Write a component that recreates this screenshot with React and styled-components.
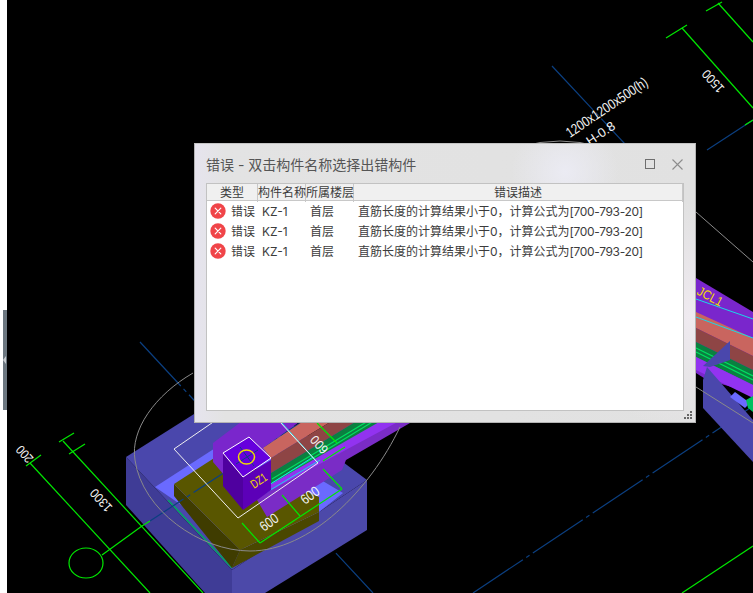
import React from "react";
import styled, { createGlobalStyle } from "styled-components";

const rows = [
  { type: "错误", name: "KZ-1", floor: "首层", desc: "直筋长度的计算结果小于0，计算公式为", code: "[700-793-20]" },
  { type: "错误", name: "KZ-1", floor: "首层", desc: "直筋长度的计算结果小于0，计算公式为", code: "[700-793-20]" },
  { type: "错误", name: "KZ-1", floor: "首层", desc: "直筋长度的计算结果小于0，计算公式为", code: "[700-793-20]" },
];

const ErrorIcon = () => (
  <IconSvg viewBox="0 0 16 16">
    <circle cx="8" cy="8" r="7.7" fill="#f04549" />
    <path d="M5.2 5.2 L10.8 10.8 M10.8 5.2 L5.2 10.8" stroke="#fff" strokeWidth="1.2" strokeLinecap="round" />
  </IconSvg>
);

const Drawing = () => (
  <Scene viewBox="7 0 746 593">
    {/* axis lines, dashed */}
    <g stroke="#0b3f80" strokeWidth="1.2" fill="none" strokeDasharray="60 4 4 4">
      <line x1="140" y1="342" x2="373" y2="593" />
      <line x1="552" y1="66" x2="640" y2="160" />
      <line x1="473" y1="593" x2="750" y2="408" />
      <line x1="707" y1="150" x2="753" y2="120" />
    </g>

    {/* foundation base */}
    <polygon points="126,457 232,570 232,593 205,593 126,505" fill="#3f3c96" />
    <polygon points="232,570 367,480 367,530 265,593 232,593" fill="#4c49a9" />
    <polygon points="126,457 240,385 367,480 232,570" fill="#4a47ac" />
    <polygon points="155,487 240,432 343,493 319,512 250,552" fill="#6a6aff" />
    <polyline points="168,500 232,568" stroke="#00a860" strokeWidth="1.5" fill="none" />

    {/* footing */}
    <polygon points="174,484 174,496 232,568 240,550" fill="#3f3c00" />
    <polygon points="240,550 319,512 319,521 232,568" fill="#4a4700" />
    <polygon points="174,484 222,453 319,497 319,512 240,550" fill="#595600" />

    {/* axis running through the column */}
    <line x1="150" y1="521" x2="300" y2="423" stroke="#0b3f80" strokeWidth="1.2" strokeDasharray="40 4 4 4" />

    {/* beam running up to the right */}
    <polygon points="250,488 267,517 342,470 346,460 410,423 410,400 300,440" fill="#7a2cc6" />
    <polygon points="258,490 262,495 420,410 400,400" fill="#9233f0" />
    <polygon points="213,443 213,462 225,476 271,458 263,448 330,400 270,400" fill="#7a26cc" />
    <polygon points="263,448 271,458 350,410 320,410" fill="#c9655f" />
    <polygon points="271,458 271,473 375,410 350,410" fill="#8e4545" />
    <polygon points="271,473 271,484 400,410 375,410" fill="#0a8040" />
    <g stroke="#00e060" strokeWidth="1.2">
      <line x1="272" y1="479" x2="368" y2="421" />
      <line x1="272" y1="483" x2="374" y2="421" />
    </g>
    <g stroke="#19d8e8" strokeWidth="1">
      <line x1="258" y1="492" x2="313" y2="457" />
      <line x1="262" y1="495" x2="320" y2="460" />
      <line x1="282" y1="423" x2="318" y2="463" />
    </g>

    {/* column */}
    <polygon points="223,453 243,477 243,510 223,486" fill="#4f009f" />
    <polygon points="243,477 271,460 271,490 243,510" fill="#5c00b8" />
    <polygon points="223,453 249,437 271,458 243,477" fill="#6600dd" stroke="#fff" strokeWidth="1" />
    <g stroke="#0b3f80" strokeWidth="1">
      <line x1="236" y1="464" x2="258" y2="450" />
      <line x1="240" y1="447" x2="254" y2="466" />
    </g>
    <ellipse cx="246.500" cy="457" rx="8" ry="7" fill="none" stroke="#f0dc00" strokeWidth="1.5" />

    {/* outline of the selected footing */}
    <polygon points="174,449 254,394 318,463 238,518" fill="none" stroke="#f0f0f0" strokeWidth="1" />

    {/* right hand beam */}
    <polygon points="696,278 753,312 753,393 707,380 696,373" fill="#7a26cc" />
    <polygon points="696,312 753,338 753,356 696,328" fill="#c9655f" />
    <polygon points="696,328 753,356 753,370 696,342" fill="#8e4545" />
    <polygon points="696,342 753,370 753,385 696,357" fill="#0a8040" />
    <polygon points="696,357 753,385 753,398 696,370" fill="#9233f0" />
    <g stroke="#00e060" strokeWidth="1.2">
      <line x1="696" y1="348" x2="753" y2="376" />
      <line x1="696" y1="352" x2="753" y2="380" />
    </g>
    <polygon points="703,366 730,341 730,360 710,367" fill="#4a47ac" />
    <polygon points="703,380 707,367 753,420 753,462 703,408" fill="#4a47ac" />
    <polygon points="735,392 750,403 745,408 730,397" fill="#6a6aff" />
    <polygon points="746,400 753,396 753,412 748,408" fill="#00c060" />
    <g stroke="#19d8e8" strokeWidth="1">
      <line x1="696" y1="299" x2="753" y2="319" />
      <line x1="696" y1="317" x2="753" y2="338" />
    </g>

    {/* dimension lines */}
    <g stroke="#00e800" strokeWidth="1.2" fill="none">
      <line x1="30" y1="463" x2="150" y2="593" />
      <line x1="63" y1="441" x2="203" y2="593" />
      <line x1="26" y1="466" x2="41" y2="455" />
      <line x1="59" y1="442" x2="74" y2="433" />
      <line x1="69" y1="454" x2="85" y2="444" />
      <ellipse cx="86" cy="563" rx="17" ry="15" />
      <line x1="102" y1="555" x2="142" y2="526" />
      <line x1="142" y1="526" x2="150" y2="521" />
      <line x1="242" y1="523" x2="260" y2="543" />
      <line x1="260" y1="543" x2="342" y2="489" />
      <line x1="282" y1="495" x2="300" y2="516" />
      <line x1="323" y1="469" x2="342" y2="489" />
      <line x1="323" y1="461" x2="345" y2="447" />
      <line x1="317" y1="423" x2="337" y2="443" />
      <line x1="666" y1="38" x2="687" y2="25" />
      <line x1="706" y1="11" x2="722" y2="2" />
      <line x1="682" y1="28" x2="753" y2="108" />
      <line x1="718" y1="3" x2="753" y2="42" />
      <line x1="745" y1="125" x2="753" y2="120" />
      <line x1="682" y1="593" x2="753" y2="546" />
    </g>

    {/* rotation guides */}
    <g stroke="#8a8a8a" strokeWidth="1" fill="none">
      <path d="M193 373 C155 395 130 430 135 460 C142 510 200 551 250 551 C310 551 370 490 400 427" />
      <path d="M520 147 Q560 135 600 147 Q660 180 696 212 L753 262" />
      <path d="M696 387 L753 423" />
    </g>

    <Label x="0" y="0" transform="translate(34 458) rotate(228) scale(0.85 1)">200</Label>
    <Label x="0" y="0" transform="translate(113 507) rotate(228) scale(0.9 1)">1300</Label>
    <Label x="0" y="0" transform="translate(725 88) rotate(228) scale(0.9 1)">1500</Label>
    <Label x="0" y="0" transform="translate(570 138) rotate(-34) scale(0.88 1.1)">1200x1200x500(h)</Label>
    <Label x="0" y="0" transform="translate(590 146) rotate(-34)">H-0.8</Label>
    <Label x="0" y="0" transform="translate(264 532) rotate(-36) scale(0.9 1.1)">600</Label>
    <Label x="0" y="0" transform="translate(305 505) rotate(-36) scale(0.9 1.1)">600</Label>
    <Label x="0" y="0" transform="translate(329 449) rotate(228) scale(0.9 1)">600</Label>
    <Label $tone="#f0dc00" x="0" y="0" transform="translate(254 489) rotate(-34) scale(0.7 0.95)">DZ1</Label>
    <Label $tone="#f0dc00" x="0" y="0" transform="translate(696 294) rotate(28) scale(0.9 1)">JCL1</Label>
  </Scene>
);

export default function App() {
  return (
    <>
      <GlobalStyle />
      <Page>
        <SideStrip>
          <Handle />
        </SideStrip>
        <Canvas>
          <Drawing />
          <Dialog>
            <TitleBar>
              <Title>错误 - 双击构件名称选择出错构件</Title>
              <WindowButtons>
                <MaxBox />
                <svg width="11" height="11" viewBox="0 0 11 11">
                  <path d="M0.5 0.5 L10.500 10.500 M10.500 0.500 L0.500 10.500" stroke="#8c8c8c" strokeWidth="1.1" />
                </svg>
              </WindowButtons>
            </TitleBar>
            <Table>
              <HeadRow>
                <HeadCell>类型</HeadCell>
                <HeadCell>构件名称</HeadCell>
                <HeadCell>所属楼层</HeadCell>
                <HeadCell>错误描述</HeadCell>
              </HeadRow>
              {rows.map((r, i) => (
                <Row key={i}>
                  <TypeCell>
                    <ErrorIcon />
                    <TypeLabel>{r.type}</TypeLabel>
                  </TypeCell>
                  <Cell>{r.name}</Cell>
                  <Cell>{r.floor}</Cell>
                  <Cell>
                    {r.desc}
                    <Code>{r.code}</Code>
                  </Cell>
                </Row>
              ))}
            </Table>
            <Grip viewBox="0 0 8 8">
              <path d="M6 0h2v2h-2z M3 3h2v2h-2z M6 3h2v2h-2z M0 6h2v2h-2z M3 6h2v2h-2z M6 6h2v2h-2z" fill="#666" />
            </Grip>
          </Dialog>
        </Canvas>
      </Page>
    </>
  );
}

const GlobalStyle = createGlobalStyle`
  html, body {
    margin: 0;
    padding: 0;
    height: 100%;
    overflow: hidden;
    background: #000;
  }
`;

const Page = styled.div`
  display: flex;
  width: 753px;
  height: 593px;
  font-family: Inter, "Noto Sans CJK SC", sans-serif;
`;

const SideStrip = styled.div`
  display: flex;
  align-items: center;
  justify-content: flex-end;
  width: 7px;
  background: #fff;
`;

const Handle = styled.div`
  position: relative;
  width: 4px;
  height: 100px;
  margin-top: 127px;
  background: #6c7780;

  &::after {
    content: "";
    position: absolute;
    left: 0;
    top: 46px;
    border-top: 4px solid transparent;
    border-bottom: 4px solid transparent;
    border-right: 3px solid #c8ccd0;
  }
`;

const Canvas = styled.div`
  position: relative;
  flex: 1;
  background: #000;
  overflow: hidden;
`;

const Scene = styled.svg`
  display: block;
  width: 746px;
  height: 593px;
`;

const Label = styled.text`
  font-family: "Liberation Sans", sans-serif;
  font-size: 13px;
  fill: ${(props) => props.$tone || "#f4f4f4"};
`;

const Dialog = styled.div`
  position: absolute;
  left: 187px;
  top: 143px;
  box-sizing: border-box;
  display: flex;
  flex-direction: column;
  width: 502px;
  height: 280px;
  padding: 0 11px 11px 11px;
  border: 1px solid #b4b4b4;
  border-top-color: #c4c4c4;
  background:
    radial-gradient(circle at 74% 10%, #ebebf3 0, rgba(235, 235, 243, 0) 12%),
    radial-gradient(circle at 99% 62%, #efeaf0 0, rgba(239, 234, 240, 0) 22%),
    linear-gradient(90deg, #e6e4ee 0, #e3e3e3 6%, #e2e2e2 60%, #e1e1e1 100%);
`;

const TitleBar = styled.div`
  display: flex;
  align-items: center;
  justify-content: space-between;
  height: 39px;
  padding-top: 1px;
  box-sizing: border-box;
`;

const Title = styled.div`
  font-size: 14px;
  color: #555;
`;

const WindowButtons = styled.div`
  display: flex;
  align-items: center;
  gap: 17px;
  margin-right: 1px;
`;

const MaxBox = styled.div`
  box-sizing: border-box;
  width: 10px;
  height: 10px;
  border: 1px solid #6e6e6e;
`;

const Table = styled.div`
  flex: 1;
  border: 1px solid #c2c2c2;
  background: #fff;
  font-size: 12px;
  color: #3c3c3c;
`;

const HeadRow = styled.div`
  display: grid;
  grid-template-columns: 51px 48px 48px 1fr;
  box-sizing: border-box;
  height: 17px;
  background: #f0f0f0;
  border-bottom: 1px solid #c8c8c8;
`;

const HeadCell = styled.div`
  box-sizing: border-box;
  border-right: 1px solid #c8c8c8;
  text-align: center;
  line-height: 18px;
  white-space: nowrap;
`;

const Row = styled.div`
  display: grid;
  grid-template-columns: 51px 48px 48px 1fr;
  align-items: center;
  height: 20px;
  line-height: 18px;
`;

const Cell = styled.div`
  padding: 2px 0 0 4px;
  white-space: nowrap;
`;

const Code = styled.span`
  letter-spacing: -0.35px;
`;

const TypeCell = styled.div`
  display: flex;
  align-items: center;
  gap: 5px;
  padding-left: 3px;
  white-space: nowrap;
`;

const TypeLabel = styled.span`
  padding-top: 2px;
`;

const IconSvg = styled.svg`
  flex: none;
  width: 16px;
  height: 16px;
`;

const Grip = styled.svg`
  position: absolute;
  right: 3px;
  bottom: 3px;
  width: 8px;
  height: 8px;
`;
